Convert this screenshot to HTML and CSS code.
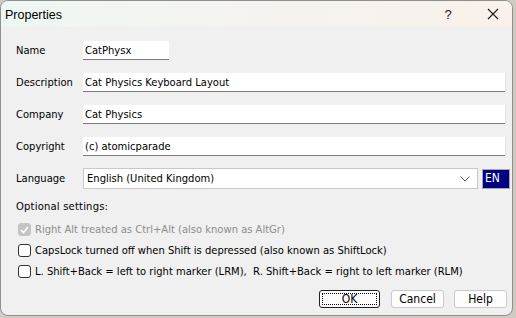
FILE: index.html
```html
<!DOCTYPE html>
<html>
<head>
<meta charset="utf-8">
<link rel="stylesheet" href="styles.css">
</head>
<body>
<div class="window">
  <div class="titlebar">
    <span class="title">Properties</span>
    <span class="tb-btn help">?</span>
    <span class="tb-btn close">
      <svg width="12" height="12" viewBox="0 0 12 12"><path d="M1 1 L11 11 M11 1 L1 11" stroke="#1a1a1a" stroke-width="1.1" fill="none"/></svg>
    </span>
  </div>
  <div class="content">
    <div class="row"><label class="lbl">Name</label><div class="field name">CatPhysx</div></div>
    <div class="row"><label class="lbl">Description</label><div class="field wide">Cat Physics Keyboard Layout</div></div>
    <div class="row"><label class="lbl">Company</label><div class="field wide">Cat Physics</div></div>
    <div class="row"><label class="lbl">Copyright</label><div class="field wide">(c) atomicparade</div></div>
    <div class="row lang"><label class="lbl">Language</label>
      <div class="select"><span>English (United Kingdom)</span>
        <svg class="chev" width="10" height="6" viewBox="0 0 10 6"><path d="M0.5 0.5 L5 5 L9.5 0.5" stroke="#555" stroke-width="1" fill="none"/></svg>
      </div>
      <div class="en">EN</div>
    </div>
    <div class="opt">Optional settings:</div>
    <div class="checks">
      <div class="chk disabled"><span class="box checked"><svg width="9" height="8" viewBox="0 0 9 8"><path d="M1 4 L3.5 6.5 L8 1" stroke="#fff" stroke-width="1.6" fill="none"/></svg></span><span>Right Alt treated as Ctrl+Alt (also known as AltGr)</span></div>
      <div class="chk"><span class="box"></span><span>CapsLock turned off when Shift is depressed (also known as ShiftLock)</span></div>
      <div class="chk"><span class="box"></span><span>L. Shift+Back = left to right marker (LRM),&nbsp; R. Shift+Back = right to left marker (RLM)</span></div>
    </div>
    <div class="buttons">
      <div class="btn default"><span class="focus">OK</span></div>
      <div class="btn">Cancel</div>
      <div class="btn">Help</div>
    </div>
  </div>
</div>
</body>
</html>
```
FILE: styles.css
```css
html, body { margin: 0; padding: 0; }
body {
  width: 516px; height: 318px;
  background: #cfcac2;
  font-family: "DejaVu Sans Condensed", "DejaVu Sans", sans-serif;
  font-size: 11.1px;
  color: #000;
  overflow: hidden;
}
.window {
  width: 511px; height: 314px;
  border: 1px solid #8f8f8f;
  border-radius: 8px;
  background: #f0f0f0;
  overflow: hidden;
  display: flex; flex-direction: column;
}
.titlebar {
  height: 26px; flex: none;
  display: flex; align-items: center;
  background: linear-gradient(90deg, #eef7f3 0%, #f5f3ef 50%, #f9f1ea 100%);
}
.title {
  font-family: "Liberation Sans", sans-serif; font-size: 12.5px;
  padding-left: 4px; flex: 1; padding-top: 1px;
}
.tb-btn { display: flex; justify-content: center; align-items: center; }
.help { width: 50px; font-family: "Liberation Sans", sans-serif; font-size: 13px; color: #1a1a1a; }
.close { width: 39px; }
.content { padding: 13px 0 0 15px; display: flex; flex-direction: column; }
.row { display: flex; align-items: center; height: 20px; margin-bottom: 12px; }
.lbl { width: 67px; flex: none; }
.field {
  height: 19px; box-sizing: border-box;
  background: #fff; border-bottom: 1px solid #7a7a7a;
  padding: 2px 0 0 2px; line-height: 15px;
}
.name { width: 86px; }
.wide { width: 422px; box-shadow: 1px 0 0 #e2e2e2; }
.row.lang { height: 21px; margin-bottom: 0; }
.select {
  width: 395px; height: 21px; box-sizing: border-box;
  border: 1px solid #c8c8c8; background: #fff;
  display: flex; align-items: center; justify-content: space-between;
  padding: 0 7px 0 3px;
}
.chev { margin-top: 1px; }
.en {
  margin-left: 4px; width: 28px; height: 20px; box-sizing: border-box;
  border: 1px solid #a7a7a7; background: #000080; color: #fff;
  padding: 1px 0 0 2px; font-size: 12px; line-height: 15px;
}
.opt { margin-top: 11px; height: 14px; line-height: 14px; letter-spacing: 0.2px; }
.checks { margin-top: 9px; padding-left: 2px; display: flex; flex-direction: column; gap: 8px; }
.chk { display: flex; align-items: center; height: 13px; gap: 4px; }
.box {
  width: 13px; height: 13px; box-sizing: border-box;
  border: 1px solid #333; border-radius: 3px; background: #fff;
  display: flex; align-items: center; justify-content: center; flex: none;
}
.chk.disabled { color: #8d8d8d; }
.box.checked { background: #c4c4c4; border-color: #c4c4c4; }
.buttons { display: flex; justify-content: flex-end; gap: 10px; margin-top: 12px; padding-right: 5px; }
.btn {
  width: 53px; height: 18px; box-sizing: border-box;
  border: 1px solid #cacaca; border-radius: 3px; background: #fdfdfd;
  display: flex; align-items: center; justify-content: center;
  font-size: 12px;
}
.btn.default { width: 61px; border-color: #202020; margin-right: 1px; }
.focus { border: 1px dotted #000; width: 55px; height: 12px; display: flex; align-items: center; justify-content: center; box-sizing: border-box; line-height: 12px; }
```
